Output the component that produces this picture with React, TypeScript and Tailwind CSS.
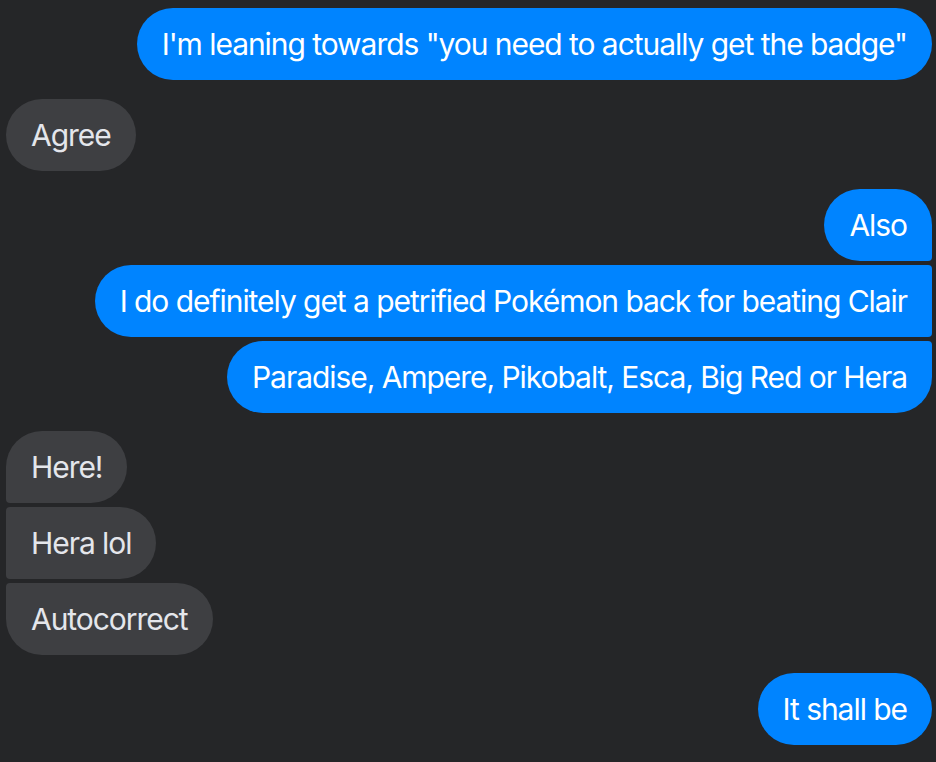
const msgs: { side: "me" | "them"; text: string; shape: string; gap?: string }[] = [
  { side: "me", text: 'I\'m leaning towards "you need to actually get the badge"', shape: "rounded-[36px]" },
  { side: "them", text: "Agree", shape: "rounded-[36px]", gap: "mt-[19px]" },
  { side: "me", text: "Also", shape: "rounded-[36px] rounded-br-[4px]", gap: "mt-[18px]" },
  { side: "me", text: "I do definitely get a petrified Pokémon back for beating Clair", shape: "rounded-[36px] rounded-r-[4px]" },
  { side: "me", text: "Paradise, Ampere, Pikobalt, Esca, Big Red or Hera", shape: "rounded-[36px] rounded-tr-[4px]" },
  { side: "them", text: "Here!", shape: "rounded-[36px] rounded-bl-[4px]", gap: "mt-[18px]" },
  { side: "them", text: "Hera lol", shape: "rounded-[36px] rounded-l-[4px]" },
  { side: "them", text: "Autocorrect", shape: "rounded-[36px] rounded-tl-[4px]" },
  { side: "me", text: "It shall be", shape: "rounded-[36px]", gap: "mt-[18px]" },
];

export default function App() {
  return (
    <div
      className="min-h-screen w-[936px] bg-[#252628] pt-2 pl-[6px] pr-1 flex flex-col"
      style={{ fontFamily: "Inter, 'Noto Sans', sans-serif" }}
    >
      {msgs.map((m, i) => (
        <div
          key={i}
          className={`flex ${m.side === "me" ? "justify-end" : "justify-start"} ${
            i === 0 ? "" : m.gap ?? "mt-1"
          }`}
        >
          <div
            className={`h-[72px] flex items-center px-[25px] text-[30px] tracking-[-1.05px] whitespace-nowrap ${m.shape} ${
              m.side === "me" ? "bg-[#0084ff] text-white" : "bg-[#3e3f42] text-[#e4e6eb]"
            }`}
          >
            {m.text}
          </div>
        </div>
      ))}
    </div>
  );
}
